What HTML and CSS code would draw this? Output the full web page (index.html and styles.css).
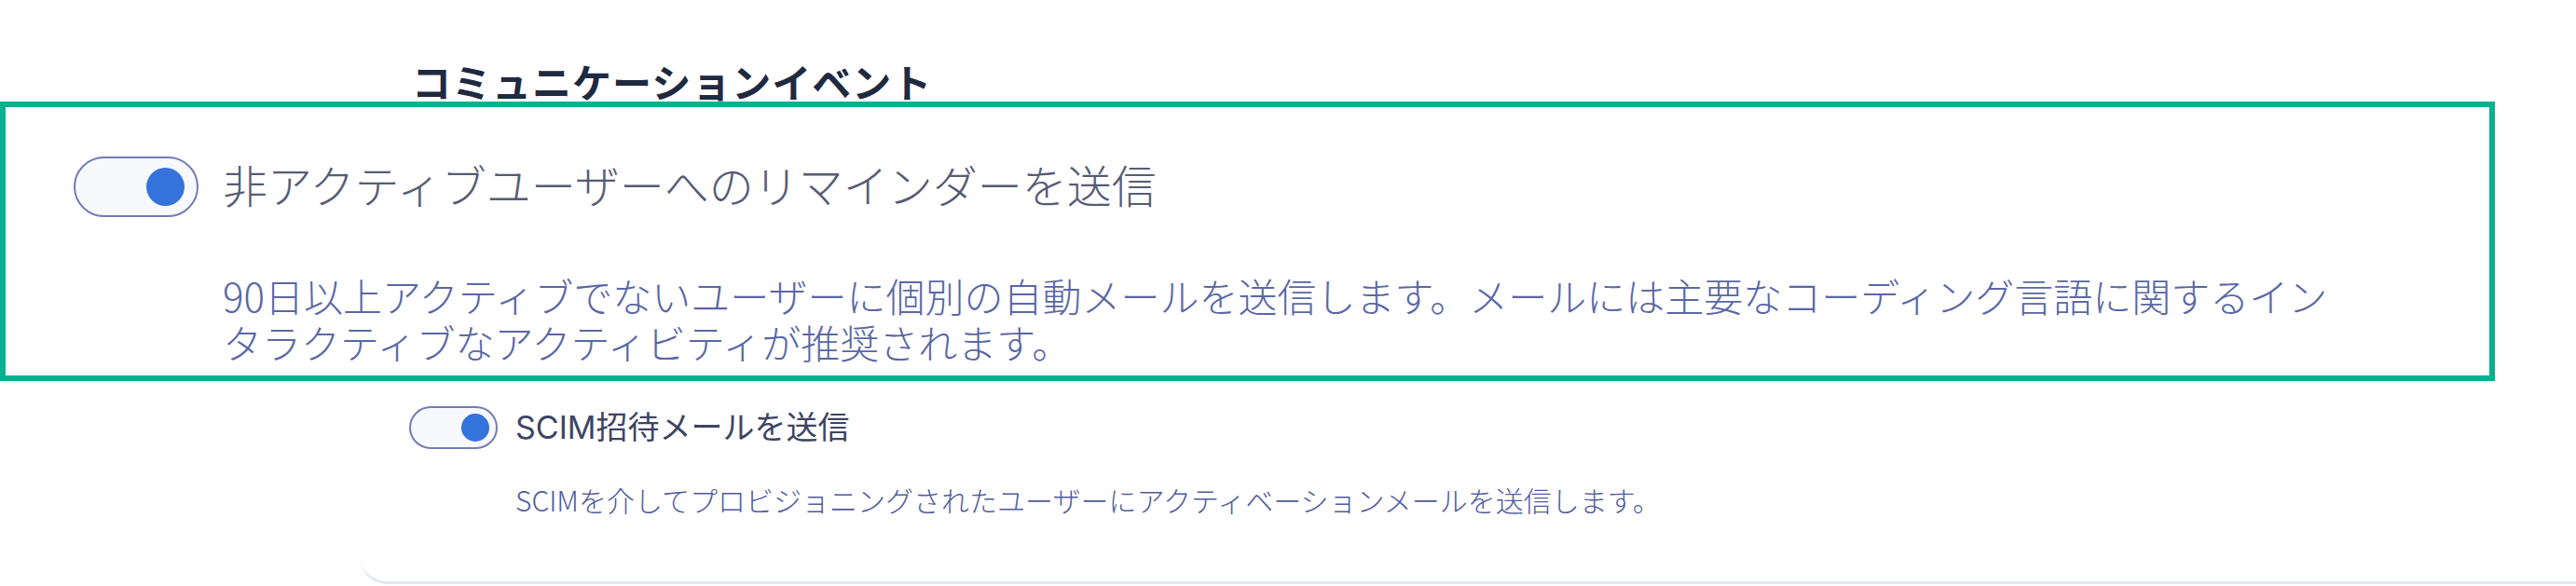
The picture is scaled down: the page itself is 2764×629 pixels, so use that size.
FILE: index.html
```html
<!DOCTYPE html>
<html lang="ja">
<head>
<meta charset="utf-8">
<title>コミュニケーションイベント</title>
<link rel="stylesheet" href="styles.css">
</head>
<body>
<div class="page">
  <section class="card">
    <h2 class="card-title">コミュニケーションイベント</h2>
    <div class="settings">
      <div class="setting is-spotlighted">
        <div class="setting-row">
          <span class="switch"><span class="switch-knob"></span></span>
          <span class="setting-label">非アクティブユーザーへのリマインダーを送信</span>
        </div>
        <p class="setting-desc">90日以上アクティブでないユーザーに個別の自動メールを送信します。メールには主要なコーディング言語に関するインタラクティブなアクティビティが推奨されます。</p>
      </div>
      <div class="setting">
        <div class="setting-row">
          <span class="switch"><span class="switch-knob"></span></span>
          <span class="setting-label">SCIM招待メールを送信</span>
        </div>
        <p class="setting-desc">SCIMを介してプロビジョニングされたユーザーにアクティベーションメールを送信します。</p>
      </div>
    </div>
  </section>

  <div class="spotlight">
    <div class="setting setting--large">
      <div class="setting-row">
        <span class="switch"><span class="switch-knob"></span></span>
        <span class="setting-label">非アクティブユーザーへのリマインダーを送信</span>
      </div>
      <p class="setting-desc">90日以上アクティブでないユーザーに個別の自動メールを送信します。メールには主要なコーディング言語に関するインタラクティブなアクティビティが推奨されます。</p>
    </div>
  </div>
</div>
</body>
</html>
```

FILE: styles.css
```css
html, body {
  margin: 0;
  padding: 0;
  background: #ffffff;
}

body {
  width: 2764px;
  height: 629px;
  overflow: hidden;
  font-family: "Noto Sans CJK JP", sans-serif;
}

.page {
  position: relative;
  width: 2764px;
  height: 629px;
}

/* ---------- card ---------- */
.card {
  margin-left: 386px;
  width: 2440px;
  padding: 62px 0 70px 53px;
  border-bottom: 3px solid #e2e5f3;
  border-bottom-left-radius: 30px;
  border-bottom-right-radius: 30px;
  background: #ffffff;
}

.card-title {
  margin: 0 0 0 3px;
  font-family: "Noto Sans CJK JP", sans-serif;
  font-weight: 700;
  font-size: 42px;
  line-height: 50px;
  letter-spacing: 1px;
  color: #1f2940;
}

.settings {
  display: flex;
  flex-direction: column;
  gap: 103px;
  margin-top: 103px;
}

.is-spotlighted {
  visibility: hidden;
}

/* ---------- setting (base size) ---------- */
.setting-row {
  display: flex;
  align-items: center;
  gap: 19px;
  height: 46px;
}

.switch {
  box-sizing: border-box;
  flex: none;
  display: flex;
  align-items: center;
  justify-content: flex-end;
  width: 95px;
  height: 46px;
  padding-right: 7px;
  border: 2px solid #737cb5;
  border-radius: 23px;
  background: #f7f9fd;
}

.switch-knob {
  display: block;
  width: 30px;
  height: 30px;
  border-radius: 50%;
  background: #3473dc;
}

.setting-label {
  font-family: Inter, "Noto Sans CJK JP", sans-serif;
  font-weight: 400;
  font-size: 34px;
  line-height: 46px;
  color: #3e4462;
  white-space: nowrap;
}

.setting-desc {
  margin: 36px 0 0 114px;
  font-family: "Noto Sans CJK JP", sans-serif;
  font-weight: 300;
  font-size: 30px;
  line-height: 36px;
  color: #505c9b;
  white-space: nowrap;
}

/* ---------- spotlight overlay ---------- */
.spotlight {
  position: absolute;
  top: 109px;
  left: 0;
  box-sizing: border-box;
  width: 2677px;
  height: 300px;
  padding: 53px 0 0 73px;
  border: 6px solid #07b08f;
  background: #ffffff;
}

.setting--large .setting-row {
  gap: 26px;
  height: 65px;
}

.setting--large .switch {
  width: 134px;
  height: 65px;
  padding-right: 13px;
  border-radius: 33px;
}

.setting--large .switch-knob {
  width: 41px;
  height: 41px;
}

.setting--large .setting-label {
  font-weight: 300;
  font-size: 48px;
  line-height: 65px;
  letter-spacing: 0;
  color: #575c74;
}

.setting--large .setting-desc {
  width: 2300px;
  margin: 59px 0 0 160px;
  font-size: 42px;
  line-height: 50px;
  color: #5a67a5;
  white-space: normal;
}
```
